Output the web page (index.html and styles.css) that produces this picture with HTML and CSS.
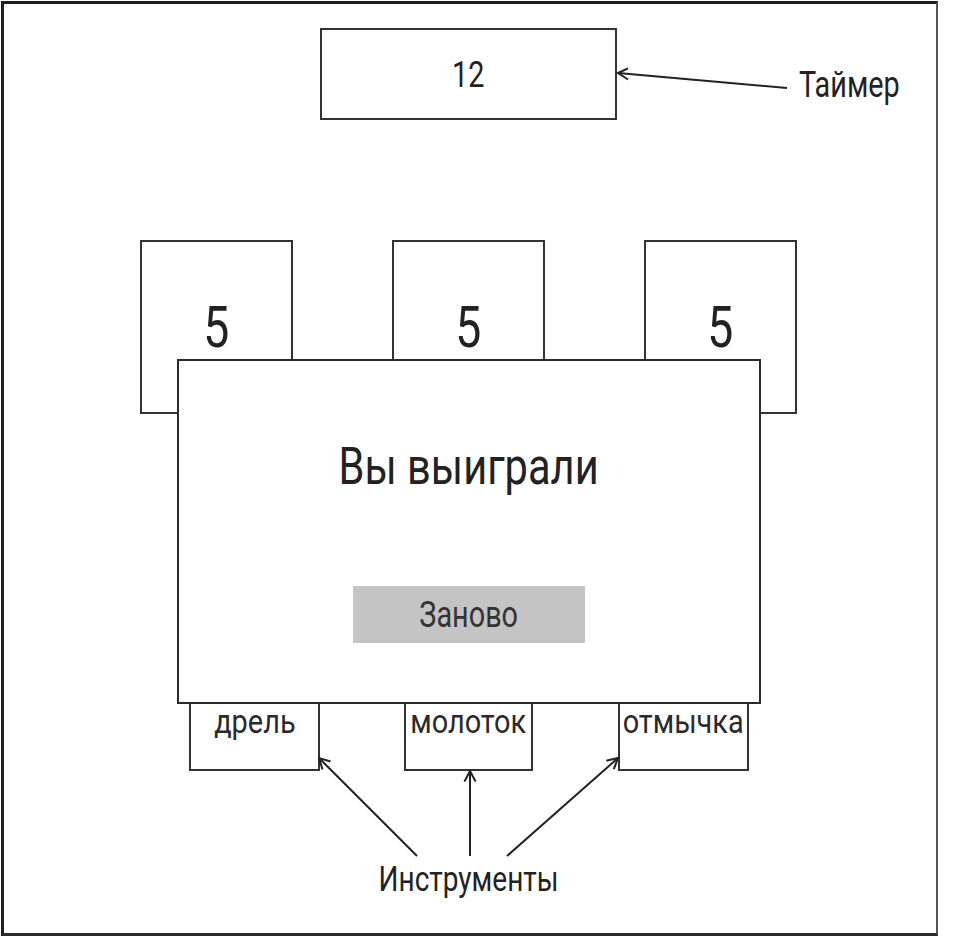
FILE: index.html
```html
<!DOCTYPE html>
<html lang="ru">
<head>
<meta charset="utf-8">
<title>Wireframe</title>
<link rel="stylesheet" href="styles.css">
</head>
<body>
<div class="frame">
  <div class="timer-row">
    <div class="timer"><span class="cond">12</span></div>
    <svg class="timer-arrow" width="182" height="92" viewBox="0 0 182 92">
      <line x1="1" y1="45" x2="170" y2="60"/>
      <polyline points="11,40.3 1,45 11,51.5"/>
    </svg>
    <div class="note note-timer"><span class="cond left">Таймер</span></div>
  </div>

  <div class="cards">
    <div class="card"><span class="cond">5</span></div>
    <div class="card"><span class="cond">5</span></div>
    <div class="card"><span class="cond">5</span></div>
  </div>

  <div class="tools">
    <div class="tool t1"><span class="cond wide">дрель</span></div>
    <div class="tool t2"><span class="cond wide">молоток</span></div>
    <div class="tool t3"><span class="cond wide">отмычка</span></div>
  </div>

  <svg class="tool-arrows" width="302" height="101" viewBox="0 0 302 101">
    <line x1="99" y1="100" x2="1" y2="2"/>
    <polyline points="12.5,5.5 1,2 4.5,13.5"/>
    <line x1="152" y1="100" x2="152" y2="15"/>
    <polyline points="146.4,25.6 152,15 157.6,25.6"/>
    <line x1="189" y1="100" x2="300" y2="2"/>
    <polyline points="295.8,13.2 300,2 288.3,4.8"/>
  </svg>

  <div class="note note-tools"><span class="cond">Инструменты</span></div>

  <div class="modal">
    <div class="modal-title"><span class="cond">Вы выиграли</span></div>
    <div class="button"><span class="cond">Заново</span></div>
  </div>
</div>
</body>
</html>
```
FILE: styles.css
```css
* { box-sizing: border-box; }
html, body { margin: 0; padding: 0; background: #fff; }
body {
  font-family: Roboto, "Liberation Sans", sans-serif;
  color: #222;
}
.frame {
  position: relative;
  margin: 1px 0 0 1px;
  width: 937px;
  height: 935px;
  border-style: solid;
  border-color: #1f1f1f #555 #2a2a2a #1f1f1f;
  border-width: 3px 2px 3px 3px;
}
.cond {
  display: inline-block;
  transform: scaleX(0.8);
  transform-origin: center;
  white-space: nowrap;
}
.cond.left { transform-origin: left; }
.cond.wide { transform: scaleX(0.85); }

.timer-row {
  display: flex;
  align-items: flex-start;
  padding: 24px 0 0 316px;
}
.timer {
  width: 297px;
  height: 92px;
  border: 2px solid #333;
  display: flex;
  align-items: center;
  justify-content: center;
  font-size: 36px;
  line-height: 1;
  padding-top: 2px;
}
.timer-arrow line, .timer-arrow polyline,
.tool-arrows line, .tool-arrows polyline {
  stroke: #222;
  stroke-width: 2;
  fill: none;
}
.note { font-size: 36px; line-height: 1; }
.note-timer { margin-top: 39px; }

.cards {
  display: flex;
  gap: 99px;
  margin-top: 120px;
  padding-left: 136px;
}
.card {
  width: 153px;
  height: 174px;
  border: 2px solid #333;
  text-align: center;
  font-size: 58px;
  line-height: 1;
  padding-top: 56px;
}

.tools {
  display: flex;
  margin-top: 277px;
  padding-left: 185px;
}
.tool {
  height: 80px;
  border: 2px solid #333;
  display: flex;
  justify-content: center;
  align-items: flex-start;
  font-size: 34px;
  line-height: 1;
  padding-top: 11px;
  color: #2a2a2a;
}
.tool .cond { flex-shrink: 0; }
.t1 { width: 131px; }
.t2 { width: 129px; margin-left: 84px; }
.t3 { width: 131px; margin-left: 85px; }

.tool-arrows {
  display: block;
  margin: -15px 0 0 314px;
}
.note-tools {
  text-align: center;
  width: 930px;
  margin-top: 5px;
  font-size: 35px;
}

.modal {
  position: absolute;
  left: 173px;
  top: 355px;
  width: 584px;
  height: 345px;
  border: 2px solid #2a2a2a;
  background: #fff;
  display: flex;
  flex-direction: column;
  align-items: center;
  padding-top: 80px;
}
.modal-title {
  font-size: 52px;
  line-height: 1;
}
.button {
  margin-top: 93px;
  width: 232px;
  height: 57px;
  background: #c4c4c4;
  display: flex;
  align-items: center;
  justify-content: center;
  font-size: 36px;
  line-height: 1;
  color: #333;
}
```
